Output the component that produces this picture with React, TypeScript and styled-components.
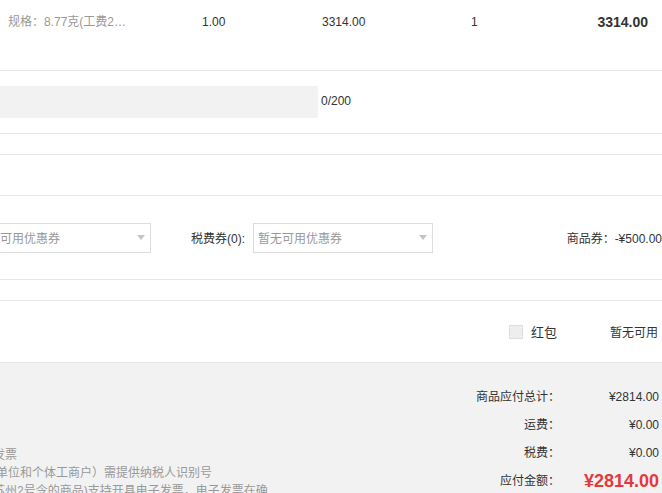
import styled, { createGlobalStyle } from "styled-components";

const GlobalStyle = createGlobalStyle`
  body {
    margin: 0;
    background: #fff;
    overflow: hidden;
  }
`;

const Page = styled.div`
  width: 662px;
  height: 493px;
  overflow: hidden;
  font-family: "Liberation Sans", Arial, "Noto Sans CJK SC", sans-serif;
  font-size: 12px;
  color: #333;
`;

const Section = styled.div<{ $h: number }>`
  height: ${(p) => p.$h}px;
  border-bottom: 1px solid #e6e6e6;
  display: flex;
  align-items: center;
`;

const ProductRow = styled.div`
  height: 71px;
  box-sizing: border-box;
  border-bottom: 1px solid #e6e6e6;
  display: flex;
  align-items: flex-start;
  padding-top: 15px;
  line-height: 14px;
`;

const Cell = styled.div<{ $w?: number }>`
  width: ${(p) => (p.$w ? `${p.$w}px` : "auto")};
  flex-shrink: 0;
`;

const Spec = styled.div`
  margin-left: 8px;
  width: 119px;
  color: #999;
  white-space: nowrap;
  overflow: hidden;
  text-overflow: ellipsis;
`;

const Subtotal = styled.div`
  flex: 1;
  text-align: right;
  padding-right: 14px;
  font-size: 14px;
  font-weight: bold;
`;

const RemarkRow = styled.div`
  height: 63px;
  box-sizing: border-box;
  border-bottom: 1px solid #e6e6e6;
  display: flex;
  align-items: flex-start;
  padding-top: 15px;
`;

const RemarkBox = styled.div`
  width: 318px;
  height: 32px;
  background: #f2f2f2;
`;

const Counter = styled.span`
  margin-left: 3px;
  line-height: 30px;
`;

const SelectBox = styled.div<{ $offset?: number }>`
  width: 180px;
  height: 30px;
  box-sizing: border-box;
  border: 1px solid #ddd;
  margin-left: ${(p) => p.$offset ?? 0}px;
  padding: 0 5px 0 4px;
  display: flex;
  align-items: center;
  justify-content: space-between;
  color: #999;
  font-size: 12px;
  white-space: nowrap;
  flex-shrink: 0;
`;

const Arrow = styled.span`
  width: 0;
  height: 0;
  border-left: 4px solid transparent;
  border-right: 4px solid transparent;
  border-top: 5px solid #c4c4c4;
`;

const CouponLabel = styled.span`
  margin-left: 40px;
  margin-right: 8px;
`;

const VoucherText = styled.span`
  margin-left: auto;
  white-space: nowrap;
`;

const PacketRow = styled(Section)`
  justify-content: flex-end;
  padding-right: 4px;
`;

const Check = styled.span`
  width: 14px;
  height: 14px;
  box-sizing: border-box;
  border: 1px solid #ddd;
  background: #eee;
`;

const PacketLabel = styled.span`
  margin-left: 8px;
  font-size: 13px;
  margin-right: 53px;
`;

const Footer = styled.div`
  background: #f2f2f2;
  display: flex;
  align-items: flex-start;
  padding-top: 20px;
  height: 200px;
`;

const InvoiceNote = styled.div`
  flex: 1;
  margin-top: 63px;
  color: #999;
  line-height: 18px;
  overflow: hidden;
`;

const NoteLine = styled.div<{ $shift: number }>`
  margin-left: ${(p) => p.$shift}px;
  width: 280px;
`;

const Summary = styled.div`
  margin-right: 3px;
`;

const SumRow = styled.div`
  display: flex;
  height: 28px;
  line-height: 28px;
`;

const SumLabel = styled.span`
  width: 130px;
  text-align: right;
`;

const SumValue = styled.span<{ $total?: boolean }>`
  width: 99px;
  text-align: right;
  color: ${(p) => (p.$total ? "#e4393c" : "#333")};
  font-size: ${(p) => (p.$total ? "18px" : "12px")};
  font-weight: ${(p) => (p.$total ? "bold" : "normal")};
`;

const summary = [
  { label: "商品应付总计：", value: "¥2814.00" },
  { label: "运费：", value: "¥0.00" },
  { label: "税费：", value: "¥0.00" },
  { label: "应付金额：", value: "¥2814.00", total: true },
];

export default function App() {
  return (
    <Page>
      <GlobalStyle />
      <ProductRow>
        <Cell $w={194 + 8}>
          <Spec>规格：8.77克(工费25元/克)</Spec>
        </Cell>
        <Cell $w={120}>1.00</Cell>
        <Cell $w={149}>3314.00</Cell>
        <Cell $w={60}>1</Cell>
        <Subtotal>3314.00</Subtotal>
      </ProductRow>

      <RemarkRow>
        <RemarkBox />
        <Counter>0/200</Counter>
      </RemarkRow>

      <Section $h={20} />
      <Section $h={40} />

      <Section $h={83}>
        <SelectBox $offset={-29}>
          暂无可用优惠券
          <Arrow />
        </SelectBox>
        <CouponLabel>税费券(0):</CouponLabel>
        <SelectBox>
          暂无可用优惠券
          <Arrow />
        </SelectBox>
        <VoucherText>商品券：-¥500.00</VoucherText>
      </Section>

      <Section $h={20} />

      <PacketRow $h={61}>
        <Check />
        <PacketLabel>红包</PacketLabel>
        <span>暂无可用</span>
      </PacketRow>

      <Footer>
        <InvoiceNote>
          <NoteLine $shift={-31}>电子发票</NoteLine>
          <NoteLine $shift={-4}>单位和个体工商户）需提供纳税人识别号</NoteLine>
          <NoteLine $shift={-7}>苏州2号令的商品)支持开具电子发票，电子发票在确认收货后开具</NoteLine>
        </InvoiceNote>
        <Summary>
          {summary.map((s) => (
            <SumRow key={s.label}>
              <SumLabel>{s.label}</SumLabel>
              <SumValue $total={s.total}>{s.value}</SumValue>
            </SumRow>
          ))}
        </Summary>
      </Footer>
    </Page>
  );
}
